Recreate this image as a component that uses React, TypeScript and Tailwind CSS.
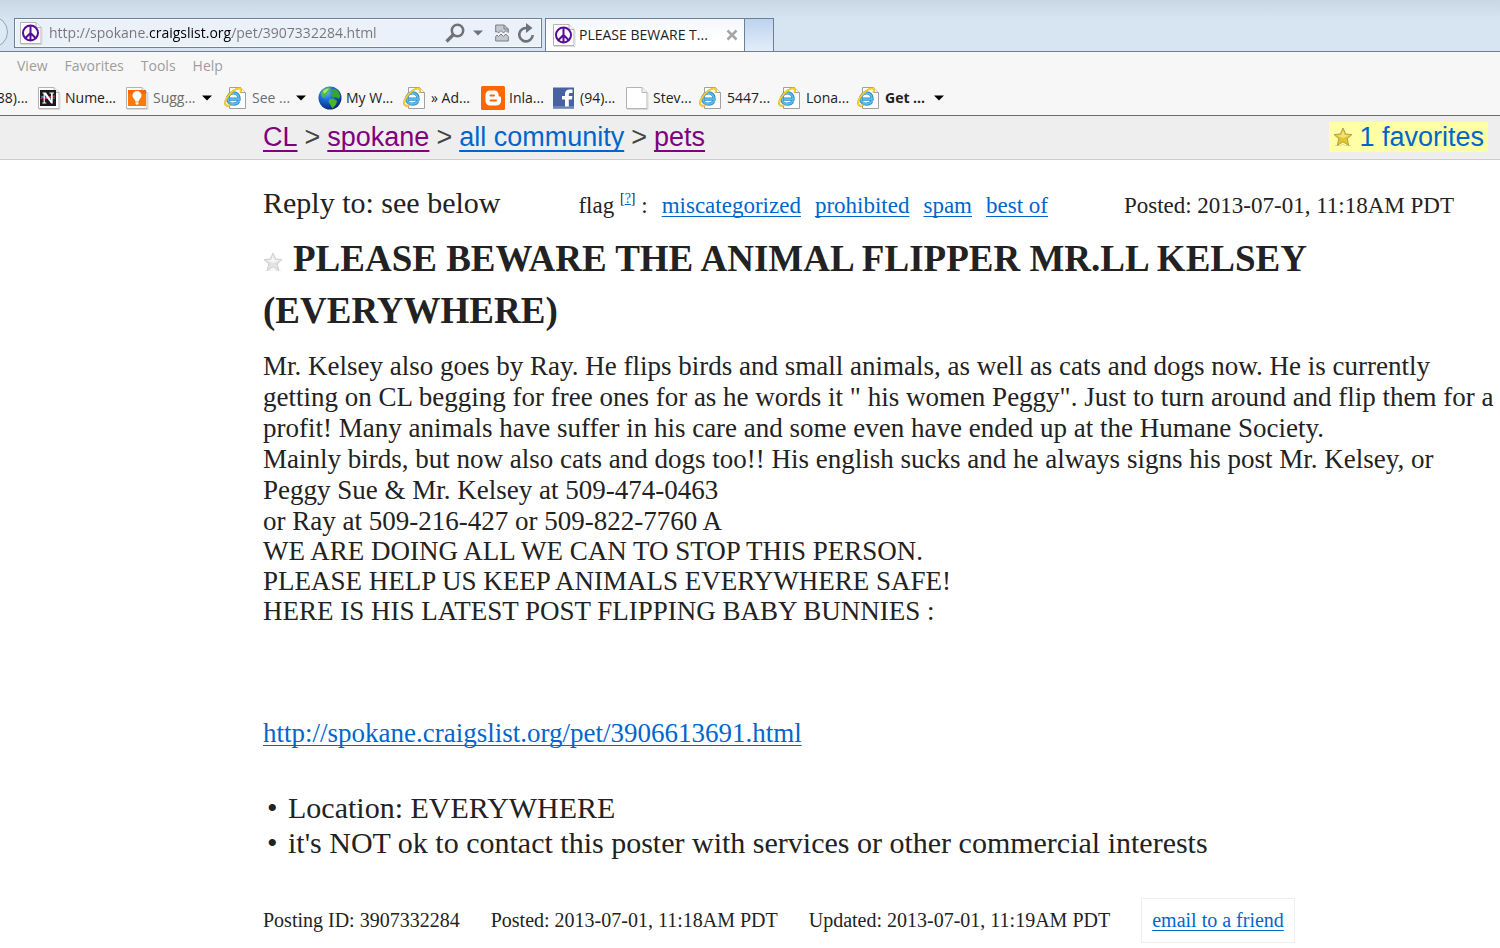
import React from 'react';

function PageSheet({ children }: { children?: React.ReactNode }) {
  return (
    <svg viewBox="0 0 24 24" className="h-6 w-6 shrink-0" aria-hidden="true">
      <path d="M1.5 1.5h15.500l5 5v16H1.500z" fill="#fff" stroke="#b4b4b4" />
      <path d="M2 23.500h21V7" fill="none" stroke="#d9d9d9" />
      <path d="M17 1.500v5h5" fill="#f4f4f4" stroke="#b4b4b4" />
      {children}
    </svg>
  );
}

function PeaceIcon() {
  return (
    <PageSheet>
      <g fill="#fff" stroke="#5a0a96" strokeWidth="2">
        <circle cx="11.500" cy="12" r="7.500" />
        <path d="M11.500 4.500v15M11.500 12l-5.300 5.300M11.500 12l5.300 5.300" fill="none" />
      </g>
    </PageSheet>
  );
}

function NumericaIcon() {
  return (
    <PageSheet>
      <path d="M3 4h16v16H3z" fill="#1d1a1e" />
      <path d="M4 13c3-4 5 1 7-1s4-1 7-2" stroke="#c8343c" strokeWidth="1.500" fill="none" />
      <path d="M4 11c4-2 5 3 14 1" stroke="#3c8ad0" strokeWidth="1.200" fill="none" />
      <path d="M5.500 6.500H9l5 7.500V7.500h-1.500v-1H17v1h-1.300v10h-1.500L7.800 9v7.500h1.500v1H5.300v-1h1.300v-9H5.500z" fill="#fff" />
    </PageSheet>
  );
}

function BulbIcon() {
  return (
    <PageSheet>
      <path d="M3 4h18v16H3z" fill="#fb7a0c" />
      <path d="M3 4h18v4H3z" fill="#ff6500" />
      <path d="M12 5a4.500 4.500 0 0 0-4.500 4.500c0 2.500 2.500 3.500 2.800 6h3.400c.3-2.500 2.800-3.500 2.800-6A4.500 4.500 0 0 0 12 5zM10.500 16.300h3v1.400l-1 1h-1l-1-1z" fill="#fff" />
    </PageSheet>
  );
}

function ExplorerIcon() {
  return (
    <svg viewBox="0 0 24 24" className="h-6 w-6 shrink-0" aria-hidden="true">
      <path d="M5.500 1.500h11l5 5v16h-16z" fill="#fff" stroke="#a0a0a0" />
      <path d="M16.500 1.500v5h5" fill="#f6f6f6" stroke="#a0a0a0" />
      <path d="M14.800 15.200C13.900 17.200 11.800 18.200 9.500 18.200c-3.300 0-5.700-2.200-5.700-5.500 0-3.400 2.500-5.800 5.700-5.800 3.600 0 5.800 2.500 5.600 6.300H5.600" fill="none" stroke="#2d8cc6" strokeWidth="3.200" />
      <path d="M14.600 15.200C13.700 17 11.700 18 9.500 18c-3.100 0-5.500-2.100-5.500-5.300 0-3.200 2.400-5.600 5.500-5.600 3.400 0 5.500 2.400 5.400 6H5.600" fill="none" stroke="#5bbdea" strokeWidth="1.800" />
      <path d="M16.400 6.500c.9-2.400.6-3.700-.7-4C12.600 1.800 6.200 6.200 3 11.500.7 15.300.4 19 2.500 19.700c1 .3 2.500-.1 4-.9" fill="none" stroke="#d9a91c" strokeWidth="1.900" />
      <path d="M16.400 6.500c.9-2.400.6-3.700-.7-4C12.600 1.800 6.200 6.200 3 11.500.7 15.300.4 19 2.500 19.700c1 .3 2.500-.1 4-.9" fill="none" stroke="#fbcf2c" strokeWidth="1.400" />
    </svg>
  );
}

function GlobeIcon() {
  return (
    <svg viewBox="0 0 24 24" className="h-6 w-6 shrink-0" aria-hidden="true">
      <defs>
        <radialGradient id="ocean" cx="0.35" cy="0.25" r="0.8">
          <stop offset="0" stopColor="#6db4f2" />
          <stop offset="0.45" stopColor="#1668d2" />
          <stop offset="1" stopColor="#06246f" />
        </radialGradient>
      </defs>
      <circle cx="12" cy="12" r="11.500" fill="url(#ocean)" />
      <path d="M3 7C4.500 3.500 8 1.300 12 1.500L13 4l-3 1.500-1 3-3 1 1 2.500-2-.5L3 9z" fill="#4fbd35" />
      <path d="M14 4l3-1.500 3.500 3L22.500 10l-1.500 3-3-2-3 .5-2-3 2-2z" fill="#39a52c" />
      <path d="M11.500 13l3.500-.5 4 2.500-1 3.500-3.500 4-2-3.500-2-3z" fill="#45b530" />
      <path d="M5 5c2-2 4-2.500 6-2.500L9 5.500 6 8z" fill="#a5e676" />
    </svg>
  );
}

function BloggerIcon() {
  return (
    <svg viewBox="0 0 24 24" className="h-6 w-6 shrink-0" aria-hidden="true">
      <rect width="24" height="24" rx="1.500" fill="#ff6600" />
      <path d="M9 4.500h4.500c2.500 0 4 1.700 4 4v.8c0 .8.500 1.200 1.200 1.200.8 0 1.300.5 1.300 1.300V15c0 2.700-1.800 4.500-4.500 4.500H9c-2.700 0-4.500-1.800-4.500-4.500V9c0-2.700 1.800-4.500 4.500-4.500z" fill="#fff" />
      <path d="M9.500 9.500h3.500M9.500 14.500h5.500" stroke="#ff6600" strokeWidth="2" strokeLinecap="round" />
    </svg>
  );
}

function FacebookIcon() {
  return (
    <svg viewBox="0 0 24 24" className="h-6 w-6 shrink-0" aria-hidden="true">
      <path d="M1 1.500h21v21H1z" fill="#4861a3" />
      <path d="M1 20h21v2.500H1z" fill="#6d84b8" />
      <path d="M13 20.500v-7h-3V10h3V8c0-3 1.700-4.500 4.500-4.500h3V7h-2c-1.300 0-1.700.6-1.700 1.700V10h3.600l-.4 3.500h-3.200v7z" fill="#fff" />
    </svg>
  );
}

function Caret({ color }: { color: string }) {
  return (
    <svg viewBox="0 0 10 6" className="h-[6px] w-[10px] shrink-0" aria-hidden="true">
      <path d="M0 .5h10L5 5.500z" fill={color} />
    </svg>
  );
}

function Star({ fill, stroke, light }: { fill: string; stroke: string; light: string }) {
  return (
    <svg viewBox="0 0 20 20" className="block h-5 w-5 shrink-0" aria-hidden="true">
      <path d="M2 18.500h6l2-1.500 2 1.500h6" stroke={stroke} strokeOpacity="0.4" fill="none" />
      <path d="M10 1l2.600 6 6.400.6-4.800 4.200 1.500 6.500L10 14.800l-5.700 3.500 1.500-6.500L1 7.600 7.400 7z" fill={fill} stroke={stroke} strokeLinejoin="round" />
      <path d="M10 3.500l1.900 4.500 4.500.5-6.400 2.500-6-2.500L8.200 8z" fill={light} />
    </svg>
  );
}

type Bookmark = { label: string; icon: React.ReactNode; width: string; tone?: string; menu?: boolean };

const bookmarks: Bookmark[] = [
  { label: 'Nume...', icon: <NumericaIcon />, width: 'w-[88px]' },
  { label: 'Sugg...', icon: <BulbIcon />, width: 'w-[99px]', tone: 'text-[#6d6d6d]', menu: true },
  { label: 'See ...', icon: <ExplorerIcon />, width: 'w-[94px]', tone: 'text-[#6d6d6d]', menu: true },
  { label: 'My W...', icon: <GlobeIcon />, width: 'w-[85px]' },
  { label: '» Ad...', icon: <ExplorerIcon />, width: 'w-[78px]' },
  { label: 'Inla...', icon: <BloggerIcon />, width: 'w-[71px]' },
  { label: '(94)...', icon: <FacebookIcon />, width: 'w-[73px]' },
  { label: 'Stev...', icon: <PageSheet />, width: 'w-[74px]' },
  { label: '5447...', icon: <ExplorerIcon />, width: 'w-[79px]' },
  { label: 'Lona...', icon: <ExplorerIcon />, width: 'w-[79px]' },
  { label: 'Get ...', icon: <ExplorerIcon />, width: 'w-[99px]', tone: 'font-bold', menu: true },
];

function BrowserChrome() {
  return (
    <header className="overflow-hidden whitespace-nowrap font-['Open_Sans',sans-serif] text-sm">
      <div className="flex h-[52px] items-end border-b border-[#6f7f95] bg-linear-to-b from-[#c9d7e5] to-[#d7e4f2] to-40%">
        <button aria-label="Forward" className="mb-[3px] -ml-6 mr-1.5 flex h-8 w-8 shrink-0 items-center justify-end rounded-full border border-[#93a3b8] bg-[#dfe9f4] pr-1.5">
          <svg viewBox="0 0 6 8" className="h-2 w-1.5" aria-hidden="true">
            <path d="M1 1l3 3-3 3" fill="none" stroke="#9dabbd" strokeWidth="1.500" />
          </svg>
        </button>
        <div className="mb-[3px] flex h-[30px] w-[528px] shrink-0 items-center border border-[#6f7f95] bg-[#eaf1fa] pl-1 pr-1.5 shadow-[inset_0_0_0_1px_#f8fbfe]">
          <PeaceIcon />
          <input
            aria-label="Address"
            defaultValue="http://spokane.craigslist.org/pet/3907332284.html"
            className="ml-1.5 w-0 min-w-0 flex-1 bg-[linear-gradient(90deg,#757575_99px,#000_99px,#000_183px,#757575_183px)] bg-clip-text text-transparent outline-none"
          />
          <button aria-label="Search" className="mr-2">
            <svg viewBox="0 0 20 20" className="h-5 w-5" aria-hidden="true">
              <circle cx="12.500" cy="7.500" r="5.700" fill="none" stroke="#6f7379" strokeWidth="2.500" />
              <path d="M8.500 11.500L1.500 18.500" stroke="#6f7379" strokeWidth="3.200" />
            </svg>
          </button>
          <button aria-label="Show address history" className="mr-3">
            <Caret color="#6f7379" />
          </button>
          <button aria-label="Compatibility view" className="mr-2">
            <svg viewBox="0 0 14 18" className="h-[18px] w-3.5" aria-hidden="true">
              <path d="M.7 8V1h8.600l4 4v3.500L10.800 6.500 8.500 9 6 6.500 3.500 9 2 7.500z" fill="#c3c8cf" stroke="#7b7f86" />
              <path d="M9 1v4h4.300" fill="none" stroke="#7b7f86" />
              <path d="M.7 17V12.500L2 11 3.500 12.500 6 10l2.500 2.500 2.300-2.500 2.500 2.500V17z" fill="#c3c8cf" stroke="#7b7f86" />
            </svg>
          </button>
          <button aria-label="Refresh">
            <svg viewBox="0 0 18 20" className="h-5 w-[18px]" aria-hidden="true">
              <path d="M11 5.300A6.700 6.700 0 1 0 15.700 12" fill="none" stroke="#6f7379" strokeWidth="2.600" />
              <path d="M9 0l6.500 5L9 10z" fill="#6f7379" />
            </svg>
          </button>
        </div>
        <div className="ml-[3px] flex h-[33px] w-[200px] shrink-0 items-center border border-b-0 border-[#6f7f95] bg-linear-to-b from-[#f3f6fb] to-white to-60% pl-1.5">
          <PeaceIcon />
          <span className="ml-[3px] min-w-0 flex-1">PLEASE BEWARE T...</span>
          <button aria-label="Close tab" className="mr-1.5">
            <svg viewBox="0 0 12 12" className="h-3 w-3" aria-hidden="true">
              <path d="M1.500 1.500l9 9M10.500 1.500l-9 9" stroke="#a5a5a5" strokeWidth="2.500" />
            </svg>
          </button>
        </div>
        <button aria-label="New tab" className="h-[33px] w-[29px] shrink-0 border border-b-0 border-l-0 border-[#6f7f95] bg-linear-to-b from-[#bdd3ee] to-[#e3edf9]" />
      </div>
      <nav className="flex h-7 items-center gap-[17px] bg-[#f7f7f7] text-[#9d9d9d]">
        <button className="-ml-7 w-7 shrink-0 text-right">Edit</button>
        <button>View</button>
        <button>Favorites</button>
        <button>Tools</button>
        <button>Help</button>
      </nav>
      <div className="flex h-9 items-center border-b border-[#6b6b6b] bg-[#f7f7f7]">
        <button className="flex w-[37px] shrink-0 justify-end pr-[9px]">(88)...</button>
        {bookmarks.map((b) => (
          <button key={b.label} className={`flex shrink-0 items-center ${b.width} ${b.tone ?? ''}`}>
            {b.icon}
            <span className="ml-1">{b.label}</span>
            {b.menu && (
              <span className="ml-auto mr-3 flex">
                <Caret color="#000" />
              </span>
            )}
          </button>
        ))}
      </div>
    </header>
  );
}

const link = 'underline decoration-1 underline-offset-[3px] [text-decoration-skip-ink:none]';

const crumbs = [
  { label: 'CL', tone: 'text-[#800080]' },
  { label: 'spokane', tone: 'text-[#800080]' },
  { label: 'all community', tone: 'text-[#0066cc]' },
  { label: 'pets', tone: 'text-[#800080]' },
];

export default function App() {
  return (
    <div className="min-h-screen overflow-x-hidden bg-white text-[#222]">
      <BrowserChrome />
      <div className="flex h-11 items-center justify-between border-b border-[#ccc] bg-[#eee] pl-[263px] pr-3 font-['Liberation_Sans',sans-serif] text-[27px] leading-[30px]">
        <nav className="flex items-center gap-[7px] pb-0.5 text-[#444]">
          {crumbs.map((c, i) => (
            <React.Fragment key={c.label}>
              {i > 0 && <span>&gt;</span>}
              <a href="#" className={`underline decoration-2 underline-offset-4 [text-decoration-skip-ink:none] ${c.tone}`}>{c.label}</a>
            </React.Fragment>
          ))}
        </nav>
        <a href="#" className="mb-0.5 flex items-center gap-1.5 bg-[#ffffa8] px-1 text-[#0066cc]">
          <Star fill="#e0c52c" stroke="#b3a04a" light="#f1e37c" />
          1 favorites
        </a>
      </div>

      <main className="pl-[263px] font-['Liberation_Serif',serif]">
        <div className="flex items-baseline whitespace-nowrap pt-6 text-[23px] leading-[38px]">
          <span className="text-[30px]">Reply to: see below</span>
          <div className="ml-[78px] flex items-baseline gap-3.5">
            <span>
              flag <sup className="-top-2.5 text-sm leading-none">[<a href="#" className="text-[#0066cc] underline">?</a>]</sup> :
            </span>
            <a href="#" className={`text-[#0066cc] ${link}`}>miscategorized</a>
            <a href="#" className={`text-[#0066cc] ${link}`}>prohibited</a>
            <a href="#" className={`text-[#0066cc] ${link}`}>spam</a>
            <a href="#" className={`text-[#0066cc] ${link}`}>best of</a>
          </div>
          <span className="ml-auto pr-[46px]">Posted: 2013-07-01, 11:18AM PDT</span>
        </div>

        <h1 className="mt-2 text-[37px] font-bold leading-[52px]">
          <button aria-label="Add to favorites" className="mr-2.5 inline-block align-[-1px]">
            <Star fill="#e2e2e4" stroke="#cfcfd1" light="#f4f4f5" />
          </button>
          PLEASE BEWARE THE ANIMAL FLIPPER MR.LL KELSEY
          <br />
          (EVERYWHERE)
        </h1>

        <section className="mt-3.5 text-[27px] leading-[31px]">
          <p>
            Mr. Kelsey also goes by Ray. He flips birds and small animals, as well as cats and dogs now. He is currently
            <br />
            getting on CL begging for free ones for as he words it " his women Peggy". Just to turn around and flip them for a
            <br />
            profit! Many animals have suffer in his care and some even have ended up at the Humane Society.
            <br />
            Mainly birds, but now also cats and dogs too!! His english sucks and he always signs his post Mr. Kelsey, or
            <br />
            Peggy Sue &amp; Mr. Kelsey at 509-474-0463
          </p>
          <p className="leading-[30px]">
            or Ray at 509-216-427 or 509-822-7760 A
            <br />
            WE ARE DOING ALL WE CAN TO STOP THIS PERSON.
            <br />
            PLEASE HELP US KEEP ANIMALS EVERYWHERE SAFE!
            <br />
            HERE IS HIS LATEST POST FLIPPING BABY BUNNIES :
          </p>
          <p className="mt-[92px]">
            <a href="#" className={`text-[#0066cc] ${link}`}>http://spokane.craigslist.org/pet/3906613691.html</a>
          </p>
        </section>

        <ul className="mt-[41px] text-[30px] leading-[35px]">
          <li className="flex"><span className="w-[25px] pl-1">•</span>Location: EVERYWHERE</li>
          <li className="flex"><span className="w-[25px] pl-1">•</span>it's NOT ok to contact this poster with services or other commercial interests</li>
        </ul>

        <footer className="mt-[38px] flex items-center gap-[31px] whitespace-nowrap text-xl leading-[25px]">
          <span>Posting ID: 3907332284</span>
          <span>Posted: 2013-07-01, 11:18AM PDT</span>
          <span>Updated: 2013-07-01, 11:19AM PDT</span>
          <a href="#" className={`border border-[#eee] px-2.5 py-[9px] text-[#0066cc] ${link}`}>email to a friend</a>
        </footer>
      </main>
    </div>
  );
}
